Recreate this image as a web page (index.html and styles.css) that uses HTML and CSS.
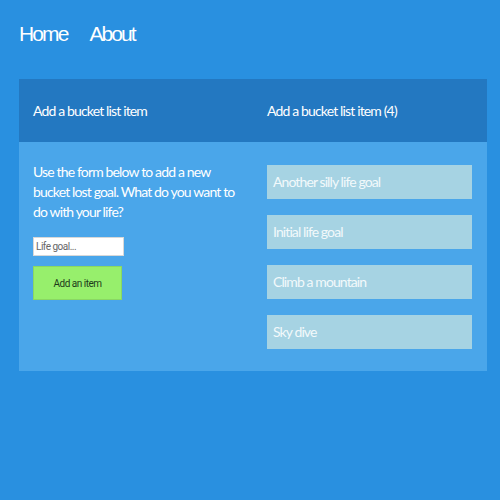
FILE: index.html
```html
<!DOCTYPE html>
<html>
<head>
<meta charset="utf-8">
<link rel="stylesheet" href="styles.css">
</head>
<body>
<nav class="nav">
  <a class="nav-link" href="#">Home</a>
  <a class="nav-link" href="#">About</a>
</nav>
<main class="panel">
  <div class="panel-head">
    <div class="col">Add a bucket list item</div>
    <div class="col">Add a bucket list item (4)</div>
  </div>
  <div class="panel-body">
    <div class="col">
      <p class="intro">Use the form below to add a new bucket lost goal. What do you want to do with your life?</p>
      <input class="goal-input" type="text" placeholder="Life goal...">
      <button class="add-btn">Add an item</button>
    </div>
    <div class="col">
      <ul class="items">
        <li class="item">Another silly life goal</li>
        <li class="item">Initial life goal</li>
        <li class="item">Climb a mountain</li>
        <li class="item">Sky dive</li>
      </ul>
    </div>
  </div>
</main>
</body>
</html>
```
FILE: styles.css
```css
html, body {
  margin: 0;
  padding: 0;
  background: #2990e0;
  height: 100%;
}
body {
  padding: 0 13px 0 19px;
  font-family: "Lato", "Open Sans", sans-serif;
  color: #fff;
}
.nav {
  display: flex;
  gap: 22px;
  padding-top: 21px;
  height: 58px;
}
.nav-link {
  font-family: "Liberation Sans", Arial, sans-serif;
  font-size: 21px;
  line-height: 26px;
  letter-spacing: -1.9px;
  color: #fff;
  text-decoration: none;
}
.panel {
  width: 468px;
}
.panel-head {
  display: flex;
  background: #2378c1;
  height: 63px;
  align-items: center;
  font-size: 14px;
  letter-spacing: -0.85px;
}
.col {
  width: 234px;
  padding: 0 15px 0 14px;
  box-sizing: border-box;
}
.panel-body {
  display: flex;
  background: #4aa6ea;
  padding: 20px 0 22px;
}
.intro {
  margin: 0;
  font-size: 14px;
  line-height: 20px;
  letter-spacing: -0.85px;
}
.goal-input {
  display: block;
  margin-top: 15px;
  width: 91px;
  height: 19px;
  box-sizing: border-box;
  border: 1px solid #d8d8d8;
  padding: 0 2px;
  font-family: "Roboto", sans-serif;
  font-size: 10px;
  letter-spacing: -0.5px;
  color: #333;
  outline: none;
}
.goal-input::placeholder {
  color: #666;
}
.add-btn {
  display: block;
  margin-top: 10px;
  width: 89px;
  height: 34px;
  background: #97ef6c;
  border: 1px solid #8ad862;
  font-family: "Roboto", sans-serif;
  font-size: 10px;
  letter-spacing: -0.5px;
  color: #1d3b1a;
  padding: 0;
}
.items {
  list-style: none;
  margin: 3px 0 0;
  padding: 0;
  display: flex;
  flex-direction: column;
  gap: 16px;
}
.item {
  background: #a6d3e3;
  height: 34px;
  line-height: 34px;
  padding-left: 6px;
  font-size: 14px;
  color: #f2f9fb;
  letter-spacing: -0.9px;
}
```
